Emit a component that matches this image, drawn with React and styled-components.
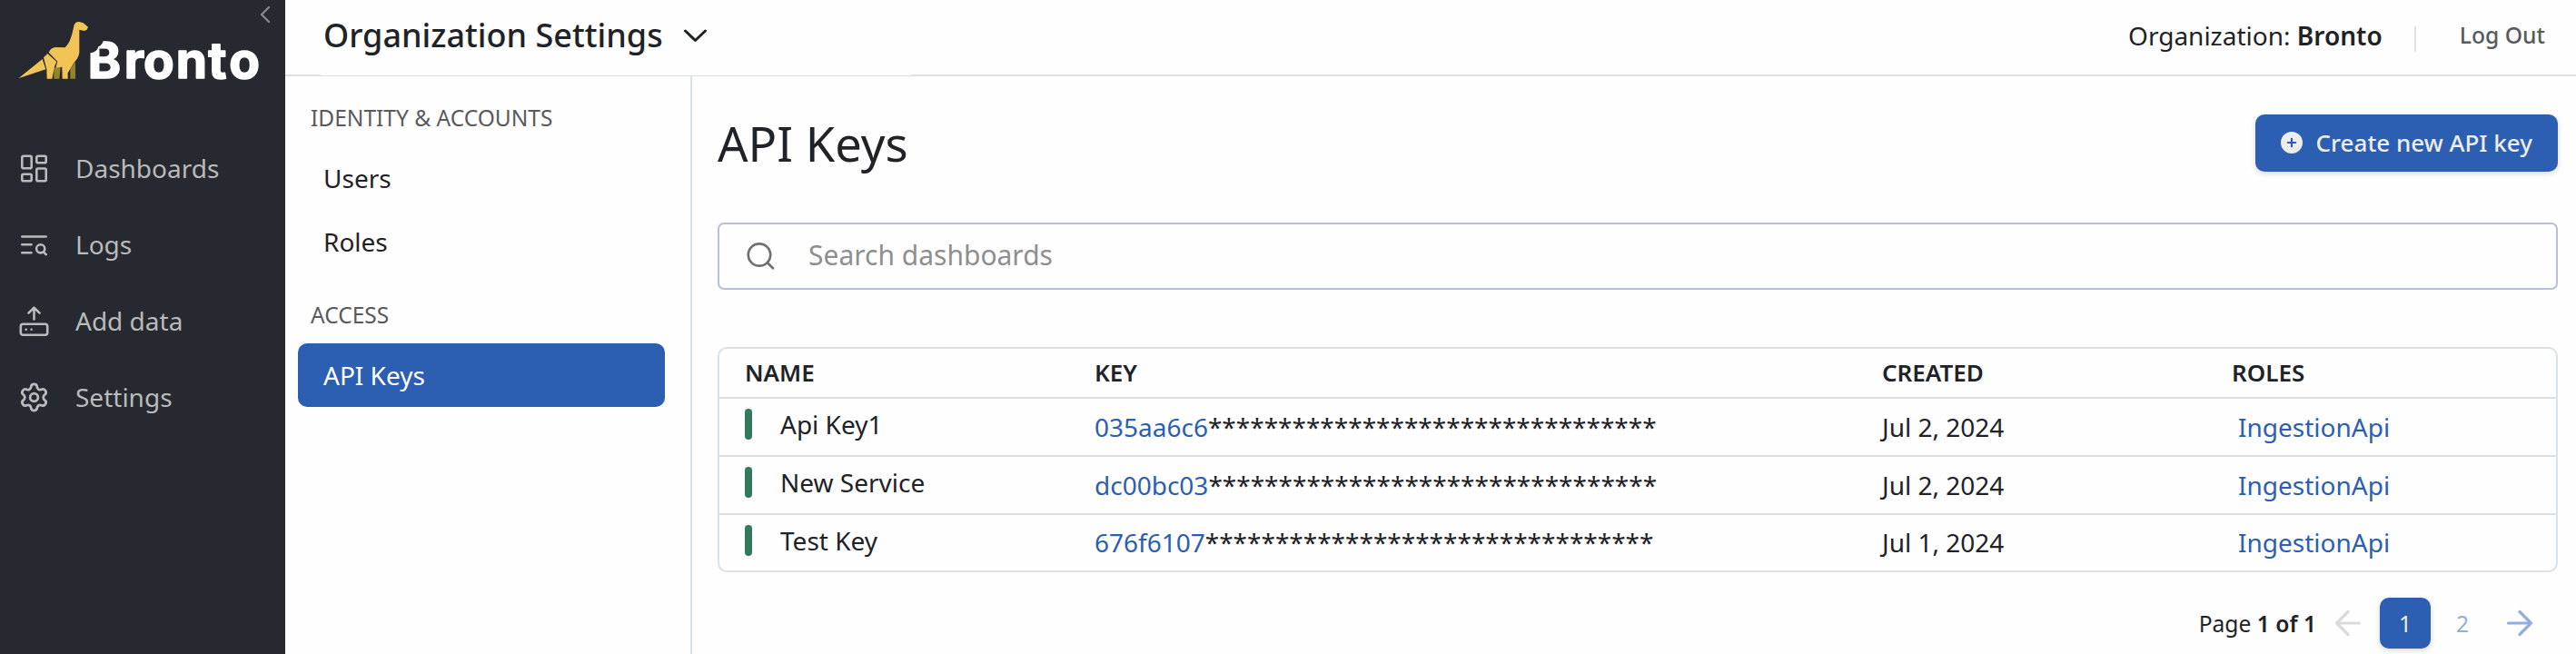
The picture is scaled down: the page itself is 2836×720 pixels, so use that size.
import React from "react";
import styled, { createGlobalStyle } from "styled-components";
import { Settings } from "lucide-react";

const Global = createGlobalStyle`
  *, *::before, *::after { box-sizing: border-box; }
  body { margin: 0; background: #fefefe; color: #1f2226; font: 400 28px/38px "Noto Sans", sans-serif; }
  button, input { font: inherit; }
  b { font-weight: 600; }
  svg { display: block; flex: none; }
`;

const Page = styled.div`
  display: grid;
  grid-template-columns: 314px 1fr;
  height: 720px;
  overflow: hidden;
`;

const Sidebar = styled.aside`
  background: #262930;
  color: #bababa;
`;

const Brand = styled.div`
  display: flex;
  height: 143px;
  padding-left: 20px;
`;

const Logo = styled.svg`
  margin-top: 20px;
`;

const Collapse = styled.svg`
  margin-top: 6px;
`;

const NavItem = styled.a`
  display: flex;
  align-items: center;
  gap: 28px;
  height: 84px;
  padding-left: 20px;
`;

const Workspace = styled.div`
  display: grid;
  grid-template-rows: 84px 1fr;
  min-width: 0;
`;

const Header = styled.header`
  display: flex;
  justify-content: space-between;
  padding: 0 34px 4px 35px;
  border-bottom: 2px solid #dce0e5;
`;

const SectionSwitch = styled.div`
  display: flex;
  align-items: center;
  gap: 22px;
  width: 658px;
  margin-bottom: -5px;
  padding: 0 0 5px 7px;
  border-radius: 6px;
  background: #fefefe;
  font-size: 36px;
  font-weight: 500;
  line-height: 48px;
`;

const Account = styled.div`
  display: flex;
  align-items: center;
`;

const Divider = styled.span`
  width: 2px;
  height: 28px;
  margin: 8px 48px 0 35px;
  background: #dfe1e8;
`;

const LogOut = styled.a`
  color: #595a5c;
  font-size: 24.7px;
  font-weight: 500;
`;

const Columns = styled.div`
  display: grid;
  grid-template-columns: 448px 1fr;
  min-height: 0;
`;

const Submenu = styled.nav`
  padding: 0 28px 0 14px;
  border-right: 2px solid #dce0e7;
`;

const GroupLabel = styled.div`
  margin: 28px 0 13px;
  padding-left: 14px;
  color: #595a5c;
  font-size: 24.5px;
  line-height: 36px;
`;

const SubItem = styled.a`
  display: flex;
  align-items: center;
  height: 70px;
  padding-left: 28px;
  border-radius: 10px;
  background: ${(p) => (p.$active ? "#2c5eb2" : "transparent")};
  color: ${(p) => (p.$active ? "#fff" : "inherit")};
`;

const Main = styled.main`
  padding: 42px 20px 0 28px;
`;

const TitleRow = styled.div`
  display: flex;
  align-items: center;
  justify-content: space-between;
  height: 63px;
`;

const Title = styled.h1`
  margin: 0;
  font-size: 52.5px;
  font-weight: 400;
  line-height: 62px;
`;

const CreateButton = styled.button`
  display: flex;
  align-items: center;
  justify-content: space-between;
  width: 333px;
  height: 63px;
  padding: 0 28px 1px;
  border: 0;
  border-radius: 10px;
  background: #2c5eb2;
  box-shadow: 0 2px 6px rgba(0, 0, 0, 0.16);
  color: #ededed;
  font-size: 26px;
  font-weight: 500;
`;

const SearchBox = styled.label`
  display: flex;
  align-items: center;
  gap: 36px;
  height: 74px;
  margin-top: 56px;
  padding-left: 30px;
  border: 2px solid #b7bfd6;
  border-radius: 7px;
`;

const SearchInput = styled.input`
  flex: 1;
  height: 60px;
  padding: 0 0 3px;
  border: 0;
  outline: 0;
  background: transparent;
  font-size: 30px;
  &::placeholder { color: #8f8f8f; opacity: 1; }
`;

const Table = styled.div`
  height: 248px;
  margin-top: 63px;
  border: 2px solid #dce0e7;
  border-radius: 10px;
`;

const NameCell = styled.div`
  display: flex;
  align-items: center;
  gap: 31px;
  padding-bottom: 6px;
`;

const Row = styled.div`
  display: grid;
  grid-template-columns: 385px 867px 385px 1fr;
  align-items: center;
  height: ${(p) => (p.$head ? 55 : 64)}px;
  padding: 0 0 ${(p) => (p.$head ? 2 : 0)}px 28px;
  border-bottom: 2px solid #dce0e5;
  font-size: ${(p) => (p.$head ? 26 : 28)}px;
  font-weight: ${(p) => (p.$head ? 600 : 400)};
  &:last-child { height: 61px; padding-bottom: 1px; border-bottom: 0; }
  &:last-child ${NameCell} { padding-bottom: 4px; }
`;

const Status = styled.span`
  width: 8px;
  height: 34px;
  border-radius: 4px;
  background: #34795c;
`;

const Link = styled.span`
  color: #2c5eb2;
`;

const RoleCell = styled.div`
  padding-left: 7px;
  color: #2c5eb2;
`;

const Pager = styled.div`
  display: flex;
  align-items: center;
  justify-content: flex-end;
  gap: 7px;
  margin-top: 28px;
  padding-right: 14px;
  font-size: 24.6px;
`;

const PageLabel = styled.span`
  padding-top: 2px;
`;

const PageButton = styled.button`
  display: flex;
  align-items: center;
  justify-content: center;
  width: 56px;
  height: 56px;
  padding: 0;
  border: 0;
  border-radius: 10px;
  background: ${(p) => (p.$active ? "#2c5eb2" : "transparent")};
  box-shadow: ${(p) => (p.$active ? "0 2px 6px rgba(0, 0, 0, 0.16)" : "none")};
  color: ${(p) => (p.$active ? "#ededed" : p.$muted ? "#dadada" : "#95aed9")};
`;

const Stroke = ({ size = 35, width = 2.6, children }) => (
  <svg width={size} height={size} viewBox={`0 0 ${size} ${size}`} fill="none" stroke="currentColor" strokeWidth={width} strokeLinecap="round" strokeLinejoin="round">
    {children}
  </svg>
);

const DashboardsIcon = () => (
  <Stroke>
    <rect x="4.3" y="3.8" width="10.4" height="13.4" rx="1.5" />
    <rect x="20.3" y="3.8" width="10.4" height="7.4" rx="1.5" />
    <rect x="4.3" y="23.8" width="10.4" height="7.4" rx="1.5" />
    <rect x="20.3" y="17.5" width="10.4" height="13.7" rx="1.5" />
  </Stroke>
);

const LogsIcon = () => (
  <Stroke>
    <path d="M4.3 8.5H30.7M4.3 17.3H14.5M4.3 26.3H14.5M27.8 25.4L30.8 28.2" />
    <circle cx="24.7" cy="21.8" r="4.6" />
  </Stroke>
);

const AddDataIcon = () => (
  <Stroke>
    <path d="M17.5 15.5V3.2M11.4 8.6L17.5 2.7L23.6 8.6" />
    <rect x="2.8" y="20.8" width="29.4" height="12" rx="2.5" />
    <path d="M8.7 26.8h.01M14.6 26.8h.01" />
  </Stroke>
);

const nav = [
  ["Dashboards", <DashboardsIcon />],
  ["Logs", <LogsIcon />],
  ["Add data", <AddDataIcon />],
  ["Settings", <Settings size={35} strokeWidth={1.9} />],
];

const keys = [
  ["Api Key1", "035aa6c6", "Jul 2, 2024"],
  ["New Service", "dc00bc03", "Jul 2, 2024"],
  ["Test Key", "676f6107", "Jul 1, 2024"],
];

export default function App() {
  return (
    <Page>
      <Global />
      <Sidebar>
        <Brand>
          <Logo width="266" height="90" viewBox="60 60 798 270">
            <path fill="#94822c" d="M178 224L200 222L196 260H178ZM232 228L249 204V260H232Z" />
            <path fill="#f2c355" d="M61 259L140 195L151 229Z" />
            <path fill="#f2c355" d="M144 190L157 177L187 204L180 220L172 260H155L154 228Z" />
            <path fill="#f2c355" d="M161 173Q168 157 184 156L215 157Q231 142 239 108L245 82Q251 70 262 72L275 76L291 89L287 98L278 102L262 98V174Q259 192 246 205L224 241V260H206L205 221L184 224L190 203Z" />
            <text x="290 410 474 581 688 757" y="258" fill="#fff" stroke="#fff" strokeWidth="5" strokeLinejoin="round" fontFamily="Inter, sans-serif" fontWeight="700" fontSize="165">Bronto</text>
            <path fill="#262930" d="M288 128H342Q340 148 325 154Q321 172 299 175H288Z" />
          </Logo>
          <Collapse width="12" height="20" viewBox="0 0 12 20" fill="none" stroke="#858688" strokeWidth="2.4" strokeLinecap="round" strokeLinejoin="round">
            <path d="M10 2L2 10L10 18" />
          </Collapse>
        </Brand>
        {nav.map(([label, icon]) => (
          <NavItem key={label}>{icon}{label}</NavItem>
        ))}
      </Sidebar>
      <Workspace>
        <Header>
          <SectionSwitch>
            Organization Settings
            <svg width="28" height="16" viewBox="0 0 28 16" fill="none" stroke="currentColor" strokeWidth="3" strokeLinecap="round" strokeLinejoin="round">
              <path d="M2.5 3L13.5 13.5L24.5 3" />
            </svg>
          </SectionSwitch>
          <Account>
            <span>Organization: <b>Bronto</b></span>
            <Divider />
            <LogOut>Log Out</LogOut>
          </Account>
        </Header>
        <Columns>
          <Submenu>
            <GroupLabel>IDENTITY &amp; ACCOUNTS</GroupLabel>
            <SubItem>Users</SubItem>
            <SubItem>Roles</SubItem>
            <GroupLabel>ACCESS</GroupLabel>
            <SubItem $active>API Keys</SubItem>
          </Submenu>
          <Main>
            <TitleRow>
              <Title>API Keys</Title>
              <CreateButton>
                <svg width="24" height="24" viewBox="0 0 24 24">
                  <circle cx="12" cy="12" r="12" fill="#ededed" />
                  <path d="M12 7.8V16.2M7.8 12H16.2" stroke="#2c5eb2" strokeWidth="2.2" strokeLinecap="round" />
                </svg>
                Create new API key
              </CreateButton>
            </TitleRow>
            <SearchBox>
              <svg width="32" height="32" viewBox="0 0 32 32" fill="none" stroke="#6f6f6f" strokeWidth="2.7" strokeLinecap="round">
                <circle cx="14" cy="14.5" r="12.2" />
                <path d="M22.8 23.3L29 29.3" />
              </svg>
              <SearchInput placeholder="Search dashboards" />
            </SearchBox>
            <Table>
              <Row $head>
                <div>NAME</div>
                <div>KEY</div>
                <div>CREATED</div>
                <div>ROLES</div>
              </Row>
              {keys.map(([name, prefix, created]) => (
                <Row key={name}>
                  <NameCell><Status />{name}</NameCell>
                  <div><Link>{prefix}</Link>{"*".repeat(32)}</div>
                  <div>{created}</div>
                  <RoleCell>IngestionApi</RoleCell>
                </Row>
              ))}
            </Table>
            <Pager>
              <PageLabel>Page <b>1 of 1</b></PageLabel>
              <PageButton $muted>
                <Stroke size={32} width={3.2}><path d="M28.5 16H3.5M16 3.5L3.5 16L16 28.5" /></Stroke>
              </PageButton>
              <PageButton $active><PageLabel>1</PageLabel></PageButton>
              <PageButton><PageLabel>2</PageLabel></PageButton>
              <PageButton>
                <Stroke size={32} width={3.2}><path d="M3.5 16H28.5M16 3.5L28.5 16L16 28.5" /></Stroke>
              </PageButton>
            </Pager>
          </Main>
        </Columns>
      </Workspace>
    </Page>
  );
}
